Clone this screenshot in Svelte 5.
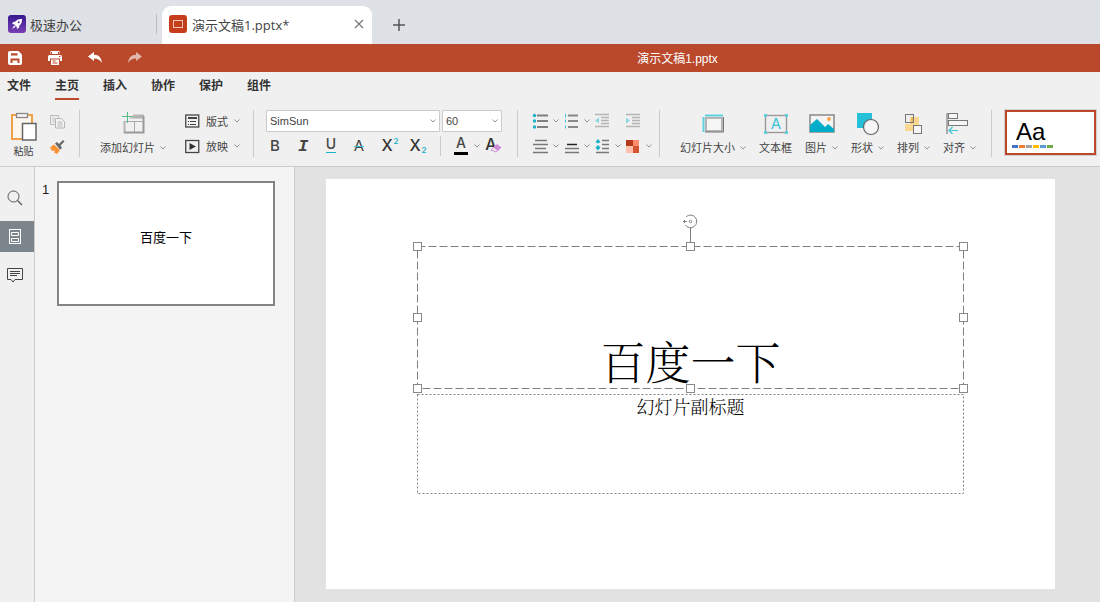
<script>
  const menus = ['文件', '主页', '插入', '协作', '保护', '组件'];
  const activeMenu = '主页';
  let font = $state('SimSun');
  let size = $state('60');
  const swatches = ['#4472c4', '#ed7d31', '#a5a5a5', '#ffc000', '#5b9bd5', '#70ad47'];
  const handles = [
    [91, 67], [364, 67], [637, 67],
    [91, 138], [637, 138],
    [91, 209], [364, 209], [637, 209]
  ];
</script>

{#snippet chevron()}
  <svg class="chev" width="6" height="6" viewBox="0 0 6 6" aria-hidden="true"><path d="M0.5 1.5 3 4 5.5 1.5" fill="none" stroke="#888" stroke-width=".9" /></svg>
{/snippet}

<div class="app">
  <header class="tabs">
    <button class="tab home">
      <svg width="18" height="18" viewBox="0 0 18 18" aria-hidden="true">
        <defs><linearGradient id="g" x1="0" y1="0" x2="0" y2="1"><stop offset="0" stop-color="#35198f" /><stop offset="1" stop-color="#7b3fb5" /></linearGradient></defs>
        <rect width="18" height="18" rx="3" fill="url(#g)" />
        <path d="M14 4c-3.500-.3-5.300 1-6.500 2.600L5.300 7 4 9l2 .2L8.800 12l.2 2 2-1.300.4-2.200C13 9.300 14.300 7.500 14 4z" fill="#fff" />
        <circle cx="10.700" cy="7.300" r="1" fill="#5a2ba2" />
        <path d="M6.200 10.300 4 14l3.700-2.200z" fill="#fff" />
      </svg>
      <span>极速办公</span>
    </button>
    <i class="tab-sep"></i>
    <div class="tab doc">
      <svg width="18" height="18" viewBox="0 0 18 18" aria-hidden="true"><rect width="18" height="18" rx="3" fill="#c43e1c" /><rect x="4.500" y="5.500" width="9" height="7" fill="none" stroke="#f3c7b8" /></svg>
      <span>演示文稿1.pptx*</span>
      <button class="close" aria-label="关闭"><svg width="10" height="10" viewBox="0 0 10 10"><path d="M1 1l8 8M9 1 1 9" stroke="#777" stroke-width="1.200" /></svg></button>
    </div>
    <button class="plus" aria-label="新建"><svg width="12" height="12" viewBox="0 0 12 12"><path d="M6 0v12M0 6h12" stroke="#555" stroke-width="1.500" /></svg></button>
  </header>

  <div class="titlebar">
    <div class="quick">
      <button aria-label="保存"><svg width="14" height="14" viewBox="0 0 14 14"><path d="M2 0h8.500L14 3.500V12a2 2 0 0 1-2 2H2a2 2 0 0 1-2-2V2a2 2 0 0 1 2-2z" fill="#fff" /><path d="M3 2.200h6.500v2.300H3zM2.500 7.500h9V12H9.500V9.500h-5V12h-2z" fill="#ba492c" /></svg></button>
      <button aria-label="打印"><svg width="14" height="14" viewBox="0 0 14 14"><path d="M2.500 0h9v3h-9zM1.500 4h11A1.500 1.500 0 0 1 14 5.500V10h-2V7.500H2V10H0V5.500A1.500 1.500 0 0 1 1.500 4zM3 8.500h8V14H3z" fill="#fff" /><path d="M3.500 1v2M10.500 1v2M4.500 10h3M4.500 12h5M11 5.500h1.500" stroke="#ba492c" /></svg></button>
      <button aria-label="撤销"><svg width="14" height="12" viewBox="0 0 14 12"><path d="M0 4.500 6 0v2.700c5 0 7.500 3.300 8 8.300C12 8 10 6.500 6 6.500V9z" fill="#fff" /></svg></button>
      <button aria-label="重做"><svg width="14" height="12" viewBox="0 0 14 12"><path d="M14 4.500 8 0v2.700c-5 0-7.500 3.300-8 8.300C2 8 4 6.500 8 6.500V9z" fill="#fff" opacity=".6" /></svg></button>
    </div>
    <span class="name">演示文稿1.pptx</span>
  </div>

  <nav class="menu">
    {#each menus as m}
      <button class:active={m === activeMenu}>{m}</button>
    {/each}
  </nav>

  <div class="ribbon">
    <div class="clip">
      <button class="paste">
        <svg width="27" height="30" viewBox="0 0 27 30" aria-hidden="true">
          <rect x="2" y="5" width="20" height="24" fill="#fdf6ec" stroke="#f0a04b" stroke-width="2" />
          <rect x="6.500" y="3.500" width="11" height="4" fill="#f5f5f5" stroke="#888" stroke-width="1.300" />
          <rect x="12.500" y="13.500" width="13.500" height="16.500" fill="#fff" stroke="#666" stroke-width="1.500" />
        </svg>
        <span>粘贴</span>
      </button>
      <div class="rows">
        <button class="row" aria-label="复制"><svg width="15" height="15" viewBox="0 0 15 15"><path d="M4.500 10.500h-4v-9h8v2" fill="none" stroke="#bbb" /><path d="M2.500 4h2M2.500 6h2M2.500 8h2" stroke="#bbb" /><path d="M5.500 4.500h6l3 3v6.500h-9z" fill="#f4f4f4" stroke="#b4b4b4" /><path d="M7.500 8h5M7.500 10h5M7.500 12h5" stroke="#b4b4b4" /></svg></button>
        <button class="row" aria-label="格式刷"><svg width="15" height="15" viewBox="0 0 15 15"><path d="M0 8.500l4-3 6 5.500-3 4-3-1.500 1-2-3 .5z" fill="#f59335" /><path d="M4.500 5.500l6 5" stroke="#f0f0f0" /><path d="M5 4.500 7 3l2 2 4-4 1.500 1.500-4 4L12 9l-2 1.500z" fill="#666" /></svg></button>
      </div>
    </div>
    <i class="sep"></i>
    <div class="slides">
      <button class="big">
        <svg width="24" height="24" viewBox="0 0 24 24" aria-hidden="true"><path d="M12 2.500h11V6H12zM2.500 9h2v12h-2z" fill="#b5b5b5" /><path d="M3 20.500h19.500V4" fill="none" stroke="#999" stroke-width="2" /><path d="M4 9.500h18M13.500 10v10M9 6h13" stroke="#aaa" /><path d="M6.500 0v11M1 4.500h11" stroke="#57bb84" /></svg>
        <span class="lab">添加幻灯片{@render chevron()}</span>
      </button>
      <div class="rows">
        <button class="row text"><svg width="15" height="15" viewBox="0 0 15 15" aria-hidden="true"><rect x=".75" y="1" width="13" height="12" fill="none" stroke="#444" stroke-width="1.300" /><path d="M3 4h9" stroke="#444" stroke-width="2" /><path d="M3 7.500h1M5 7.500h6M3 10.500h1M5 10.500h6" stroke="#444" /></svg><span>版式</span>{@render chevron()}</button>
        <button class="row text"><svg width="15" height="15" viewBox="0 0 15 15" aria-hidden="true"><rect x=".75" y="1.500" width="13" height="12" fill="none" stroke="#444" stroke-width="1.300" /><path d="M4.500 4v7L11 7.500z" fill="#333" /></svg><span>放映</span>{@render chevron()}</button>
      </div>
    </div>
    <i class="sep"></i>
    <div class="font">
      <div class="pickers">
        <label class="pick wide"><select aria-label="字体" bind:value={font}><option>SimSun</option></select>{@render chevron()}</label>
        <label class="pick"><select aria-label="字号" bind:value={size}><option>60</option></select>{@render chevron()}</label>
      </div>
      <div class="styles">
        <button aria-label="加粗"><svg width="18" height="18" viewBox="0 0 18 18"><text x="9" y="14" class="g b">B</text></svg></button>
        <button aria-label="倾斜"><svg width="18" height="18" viewBox="0 0 18 18"><text x="9" y="14" class="g mono">I</text></svg></button>
        <button aria-label="下划线"><svg width="18" height="18" viewBox="0 0 18 18"><text x="9" y="12" class="g m">U</text><path d="M4 15.500h10" stroke="#17b3c8" /></svg></button>
        <button aria-label="删除线"><svg width="18" height="18" viewBox="0 0 18 18"><text x="9" y="14" class="g">A</text><path d="M4 9.500h10" stroke="#3cc3d5" /></svg></button>
        <button aria-label="上标"><svg width="18" height="18" viewBox="0 0 18 18"><text x="9" y="14" class="g x">X</text><text x="18" y="7" class="s">2</text></svg></button>
        <button aria-label="下标"><svg width="18" height="18" viewBox="0 0 18 18"><text x="9" y="14" class="g x">X</text><text x="18" y="16" class="s">2</text></svg></button>
        <i class="sep short"></i>
        <button aria-label="字体颜色" class="color"><svg width="18" height="18" viewBox="0 0 18 18"><text x="9" y="11" class="g m">A</text><path d="M2 16.500h14" stroke="#000" stroke-width="3" /></svg>{@render chevron()}</button>
        <button aria-label="清除样式"><svg width="18" height="18" viewBox="0 0 18 18"><text x="7" y="13" class="g x">A</text><path d="M7 13l4-4 5 2.500L12 15z" fill="#f0f0f0" stroke="#cf8bd6" /><path d="M9.500 10.500l3.500-3.500 4.500 3.500-4 3.500z" fill="#cf8bd6" /></svg></button>
      </div>
    </div>
    <i class="sep"></i>
    <div class="para">
      <button aria-label="项目符号"><svg width="15" height="15" viewBox="0 0 15 15"><path d="M4 1.500h11M4 7h11M4 13h11" stroke="#808080" stroke-width="2" /><g fill="#17b3c8"><circle cx="1.500" cy="1.500" r="1.700" /><circle cx="1.500" cy="7" r="1.700" /><circle cx="1.500" cy="13" r="1.700" /></g></svg>{@render chevron()}</button>
      <button aria-label="编号"><svg width="15" height="15" viewBox="0 0 15 15"><path d="M4 1.500h10M4 7h10M4 13h10" stroke="#888" stroke-width="2" /><path d="M1.500 0v3.500M1.500 5.500v3M1.500 11.500v3" stroke="#3cc3d5" /></svg>{@render chevron()}</button>
      <button aria-label="减少缩进"><svg width="15" height="15" viewBox="0 0 15 15"><path d="M0 .5h14M6 3.500h8M6 6.500h8M6 9.500h8M0 12.500h14" stroke="#b5b5b5" stroke-width="1.400" /><path d="M4 3.500v6L0 6.500z" fill="#8ad9e3" /></svg></button>
      <button aria-label="增加缩进"><svg width="15" height="15" viewBox="0 0 15 15"><path d="M0 .5h14M6 3.500h8M6 6.500h8M6 9.500h8M0 12.500h14" stroke="#b5b5b5" stroke-width="1.400" /><path d="M0 3.500v6L4 6.500z" fill="#8ad9e3" /></svg></button>
      <button aria-label="水平对齐"><svg width="15" height="15" viewBox="0 0 15 15"><path d="M2 1.500h12M0 5.500h15M2 9.500h11M0 13.500h15" stroke="#777" stroke-width="1.500" /></svg>{@render chevron()}</button>
      <button aria-label="垂直对齐"><svg width="15" height="15" viewBox="0 0 15 15"><path d="M3 5.500h10" stroke="#222" stroke-width="1.500" /><path d="M1 9.500h14M1 13.500h14" stroke="#777" stroke-width="1.500" /></svg>{@render chevron()}</button>
      <button aria-label="行距"><svg width="15" height="15" viewBox="0 0 15 15"><path d="M7 1.500h7M7 5.500h7M7 9.500h7M1 13.500h13" stroke="#777" stroke-width="1.500" /><path d="M.5 3 3 0l2.500 3L3 4.500zM.5 8.500 3 6l2.500 2.500L3 11.500z" fill="#17b3c8" /></svg>{@render chevron()}</button>
      <button aria-label="配色"><svg width="15" height="15" viewBox="0 0 15 15"><path d="M0 1h7v6H0z" fill="#b23a1b" /><path d="M7 1h6v6H7z" fill="#ff8d6b" /><path d="M0 7h7v7H0z" fill="#ffbfae" /><path d="M7 7h6v7H7z" fill="#d6532f" /></svg>{@render chevron()}</button>
    </div>
    <i class="sep"></i>
    <div class="insert">
      <button class="big">
        <svg width="24" height="24" viewBox="0 0 24 24" aria-hidden="true"><path d="M4 3.500h18M2.500 5v15" stroke="#5fd0dd" stroke-width="2" /><rect x="5" y="6" width="16" height="13" fill="#f6f6f6" stroke="#b5b5b5" stroke-width="2" /><path d="M4 20h18.500V5" fill="none" stroke="#777" /></svg>
        <span class="lab">幻灯片大小{@render chevron()}</span>
      </button>
      <button class="big">
        <svg width="24" height="24" viewBox="0 0 24 24" aria-hidden="true"><rect x="1.500" y="3.500" width="21" height="17" fill="none" stroke="#999" stroke-width="1.400" /><path d="M0 2h3v3H0zM21 2h3v3h-3zM0 19h3v3H0zM21 19h3v3h-3z" fill="#5fd0dd" /><text x="12" y="17" class="g tb">A</text></svg>
        <span class="lab">文本框</span>
      </button>
      <button class="big">
        <svg width="26" height="24" viewBox="0 0 26 24" aria-hidden="true"><rect x="1" y="3" width="24" height="17" fill="#f4f4f4" stroke="#888" stroke-width="1.500" /><path d="M1 13l7-6 8 8 3-3 6 5v3H1z" fill="#00acc8" /><circle cx="20" cy="7" r="2" fill="#f6a54c" /></svg>
        <span class="lab">图片{@render chevron()}</span>
      </button>
      <button class="big">
        <svg width="24" height="24" viewBox="0 0 24 24" aria-hidden="true"><path d="M1 1h15v15H1z" fill="#26c0d8" /><circle cx="15" cy="15" r="7.500" fill="#f6f6f6" stroke="#666" stroke-width="1.200" /></svg>
        <span class="lab">形状{@render chevron()}</span>
      </button>
      <button class="big">
        <svg width="24" height="24" viewBox="0 0 24 24" aria-hidden="true"><path d="M8 5h9v9H8zM3 12h9v7H3z" fill="#fbd88f" /><rect x="3.500" y="2.500" width="8" height="8" fill="none" stroke="#777" /><path d="M9 5h2v5H9z" fill="#f2b85a" /><rect x="11.500" y="13.500" width="8" height="8" fill="#f6f6f6" stroke="#777" /></svg>
        <span class="lab">排列{@render chevron()}</span>
      </button>
      <button class="big">
        <svg width="24" height="24" viewBox="0 0 24 24" aria-hidden="true"><path d="M-1 1v21" stroke="#aaa" stroke-width="2" /><rect x=".5" y="1.500" width="9" height="5" fill="#f6f6f6" stroke="#777" /><rect x=".5" y="8.500" width="19" height="5" fill="#f6f6f6" stroke="#777" /><path d="M1 18.500h9M4.500 15 1 18.500 4.500 22" fill="none" stroke="#3cc3d5" stroke-width="1.200" /></svg>
        <span class="lab">对齐{@render chevron()}</span>
      </button>
    </div>
    <i class="sep"></i>
    <button class="theme">
      <span>Aa</span>
      <span class="sw">{#each swatches as c}<i style:background={c}></i>{/each}</span>
    </button>
  </div>

  <main>
    <aside class="rail">
      <button aria-label="查找"><svg width="16" height="16" viewBox="0 0 16 16"><circle cx="6.500" cy="6.500" r="5.500" fill="none" stroke="#555" /><path d="M10.500 10.500 15 15" stroke="#555" stroke-width="1.300" /></svg></button>
      <button class="on" aria-label="幻灯片"><svg width="16" height="16" viewBox="0 0 16 16"><rect x="2.500" y=".5" width="11" height="14" fill="none" stroke="#fff" /><path d="M4.500 3.500h7v3h-7zM4.500 9.500h7v3h-7z" fill="none" stroke="#fff" /></svg></button>
      <button aria-label="批注"><svg width="16" height="16" viewBox="0 0 16 16"><path d="M.5 .5h15v11H8L6 14l-2-2.500H.5z" fill="none" stroke="#444" /><path d="M3 3.500h10M3 5.500h10M3 7.500h7" stroke="#444" /></svg></button>
    </aside>
    <section class="thumbs">
      <span class="num">1</span>
      <button class="thumb">百度一下</button>
    </section>
    <section class="canvas">
      <div class="slide">
        <div class="ph title">百度一下</div>
        <div class="ph sub">幻灯片副标题</div>
        <svg class="frame" viewBox="0 0 729 410" aria-hidden="true">
          <g fill="none" stroke="#808080">
            <rect x="91.500" y="67.500" width="546" height="142" stroke-dasharray="8 3" />
            <rect x="91.500" y="215.500" width="546" height="99" stroke-dasharray="2 2" />
            <path d="M364.500 49v15" />
            <path d="M360.200 37.700a6.300 6.300 0 1 1-1 8.200" />
            <path d="M357 42.500h4M358.500 41v3" />
            <circle cx="364.500" cy="42.500" r="1.200" />
          </g>
          {#each handles as [x, y]}
            <rect x={x - 3.5} y={y - 3.5} width="8" height="8" fill="#fff" stroke="#888" />
          {/each}
        </svg>
      </div>
    </section>
  </main>
</div>

<style>
  :global(body) { margin: 0; }
  .app {
    min-height: 100vh;
    display: flex;
    flex-direction: column;
    background: #f0f0f0;
    font-family: "Liberation Sans", "Noto Sans CJK SC", sans-serif;
    font-size: 11px;
    color: #444;
  }
  button { border: 0; padding: 0; margin: 0; background: none; font: inherit; color: inherit; display: flex; align-items: center; }
  svg { display: block; flex: none; overflow: visible; }

  .tabs { display: flex; align-items: flex-end; height: 44px; background: #dee1e6; font-family: "Open Sans", "Noto Sans CJK SC", sans-serif; font-size: 13px; }
  .tab { display: flex; align-items: center; gap: 5px; height: 38px; line-height: 18px; }
  .tab span { padding-bottom: 1px; }
  .tab svg { margin-bottom: 2px; }
  .home { width: 148px; margin-left: 8px; gap: 4px; }
  .tab-sep { width: 1px; height: 20px; margin: 0 5px 10px 0; background: #bbbec3; }
  .doc { width: 195px; padding: 0 8px 0 7px; background: #fff; border-radius: 9px 9px 0 0; }
  .close { margin-left: auto; }
  .plus { height: 38px; margin-left: 21px; }

  .titlebar { display: flex; align-items: center; height: 28px; background: #ba492c; color: #fff; font-size: 12px; }
  .quick { display: flex; gap: 26px; padding-left: 8px; width: 248px; box-sizing: border-box; }
  .name { flex: 1; text-align: center; margin-left: 7px; padding-bottom: 2px; }

  .menu { display: flex; gap: 24px; height: 28px; padding-left: 7px; }
  .menu button { font-size: 12px; font-weight: 700; color: #333; padding-bottom: 1px; box-sizing: border-box; border-bottom: 2px solid transparent; }
  .menu .active { border-color: #ba492c; }

  .ribbon { display: flex; align-items: flex-start; padding: 10px 4px 9px 10px; border-bottom: 1px solid #cbcbcb; }
  .sep { flex: none; width: 1px; height: 47px; background: #cbcbcb; }
  .clip { display: flex; gap: 13px; padding-right: 14px; }
  .paste { flex-direction: column; gap: 5px; height: 47px; font-size: 10px; line-height: 14px; }
  .rows { display: flex; flex-direction: column; gap: 3px; }
  .row { height: 22px; }
  .text { gap: 6px; }
  .slides { display: flex; gap: 19px; padding: 0 13px 0 20px; }
  .big { flex-direction: column; gap: 3px; height: 47px; padding-top: 2px; line-height: 18px; white-space: nowrap; box-sizing: border-box; }
  .big .lab { display: flex; align-items: center; gap: 5px; }

  .font { padding: 0 15px 0 12px; }
  .pickers { display: flex; gap: 2px; }
  .pick { position: relative; width: 60px; height: 22px; }
  .wide { width: 174px; }
  .pick select { appearance: none; width: 100%; height: 22px; box-sizing: border-box; margin: 0; border: 1px solid #cbcbcb; border-radius: 1px; padding: 0 14px 0 3px; background: #fff; color: #444; font: inherit; }
  .pick .chev { position: absolute; right: 4px; top: 8px; pointer-events: none; }
  .styles { display: flex; align-items: center; gap: 10px; margin-top: 3px; height: 22px; }
  .short { height: 20px; margin: 0 1px 0 6px; }
  .color { gap: 4px; }
  .color + button { margin-left: -6px; }
  .g { font-family: Inter, sans-serif; font-size: 15px; fill: #444; text-anchor: middle; }
  .b { font-weight: 500; }
  .m { font-size: 14px; font-weight: 500; }
  .x { font-size: 16px; font-weight: 500; fill: #333; }
  .tb { fill: #3cc3d5; }
  .mono { font-family: "Liberation Mono", monospace; font-style: italic; font-weight: 700; font-size: 17px; }
  .s { font-family: Inter, sans-serif; font-size: 8px; font-weight: 600; fill: #17b3c8; text-anchor: middle; }

  .para { display: grid; grid-template-columns: repeat(4, 31px); gap: 3px 0; padding: 0 2px 0 15px; }
  .para button { height: 22px; gap: 5px; }
  .insert { display: flex; gap: 13px; padding: 0 15px 0 20px; }

  .theme { flex: 1; flex-direction: column; align-items: flex-start; justify-content: center; height: 45px; box-sizing: border-box; margin-left: 13px; padding: 0 0 0 5px; border: 2px solid #ba492c; outline: 1px solid #d0d0d0; background: #fff; color: #000; font-size: 24px; line-height: 26px; }
  .theme > span:first-child { padding: 2px 0 0 4px; }
  .sw { display: flex; gap: 1px; }
  .sw i { width: 6px; height: 3px; }

  main { flex: 1; display: flex; }
  .rail { width: 34px; border-right: 1px solid #cbcbcb; padding-top: 15px; display: flex; flex-direction: column; gap: 8px; }
  .rail button { height: 31px; padding-left: 7px; }
  .rail .on { background: #7d858c; }
  .thumbs { width: 260px; border-right: 1px solid #cbcbcb; background: #f4f4f4; display: flex; align-items: flex-start; gap: 8px; padding: 14px 19px 0 7px; box-sizing: border-box; }
  .thumbs .num { width: 7px; line-height: 18px; font-size: 13px; color: #222; }
  .thumb { flex: 1; justify-content: center; height: 125px; padding-bottom: 14px; border: 2px solid #848484; background: #fff; color: #000; font-size: 13px; }
  .canvas { flex: 1; background: #e2e2e2; padding: 12px 45px 13px 31px; }
  .slide { position: relative; aspect-ratio: 729 / 410; background: #fff; color: #000; font-family: "Noto Serif CJK SC", "Noto Sans CJK SC", serif; font-weight: 300; }
  .ph { position: absolute; left: 12.5%; width: 75%; text-align: center; }
  .title { top: 37.5%; font-size: 45px; line-height: 56px; }
  .sub { top: 52.5%; font-size: 18px; line-height: 24px; }
  .frame { position: absolute; inset: 0; width: 100%; }
</style>
